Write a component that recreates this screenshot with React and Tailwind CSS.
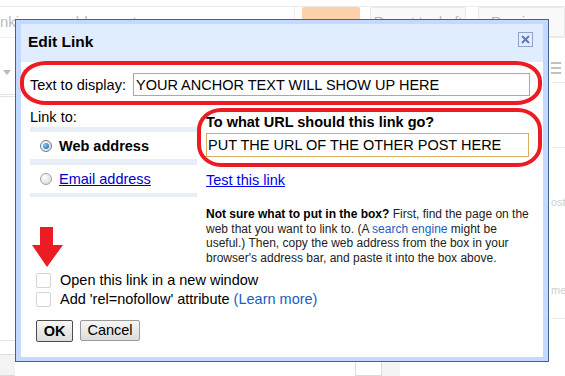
import { useState } from "react";

function Radio({ checked }) {
  return (
    <span
      className={
        "flex h-[12px] w-[12px] shrink-0 items-center justify-center rounded-full border " +
        (checked
          ? "border-[#6b7d94] bg-[radial-gradient(circle_at_35%_35%,#ffffff,#c9d3de)]"
          : "border-[#a4a4a4] bg-[radial-gradient(circle_at_35%_35%,#ffffff,#d4d4d4)]")
      }
    >
      {checked && (
        <span className="h-[6px] w-[6px] rounded-full bg-[radial-gradient(circle_at_35%_35%,#8fc6ef,#1d5b92)]" />
      )}
    </span>
  );
}

function Checkbox() {
  return <span className="h-[15px] w-[15px] shrink-0 rounded-[2px] border border-[#d4d4d4] bg-white" />;
}

export default function App() {
  const [anchor, setAnchor] = useState("YOUR ANCHOR TEXT WILL SHOW UP HERE");
  const [url, setUrl] = useState("PUT THE URL OF THE OTHER POST HERE");
  const [linkType, setLinkType] = useState("web");

  return (
    <div className="relative h-[376px] w-[565px] overflow-hidden bg-white font-['Liberation_Sans',Arial,sans-serif] text-black">
      {/* Faded editor page behind the dialog */}
      <div className="flex h-full flex-col opacity-40">
        <div className="h-[7px] border-b border-[#cfcfcf]" />
        <div className="flex h-[31px] items-stretch border-b border-[#d6d6d6]">
          <div className="flex w-[295px] items-center border-r border-[#cfcfcf] pl-0 text-[15px] text-[#555]">
            nking <span className="ml-[40px]">blog post</span>
          </div>
          <div className="ml-[7px] w-[58px] rounded-[2px] bg-[#f98c2b]" />
          <div className="ml-[10px] flex w-[96px] items-center justify-center rounded-[2px] border border-[#c8c8c8] bg-[#f1f1f1] text-[14px] text-[#444]">
            Revert to draft
          </div>
          <div className="ml-[12px] flex flex-1 items-center rounded-[2px] border border-[#c8c8c8] bg-[#f1f1f1] pl-[12px] text-[15px] text-[#444]">
            Preview
          </div>
        </div>
        <div className="flex flex-1">
          <div className="flex w-[15px] shrink-0 flex-col">
            <div className="mt-[32px] ml-[3px] h-0 w-0 border-x-[4px] border-t-[5px] border-x-transparent border-t-[#555]" />
            <div className="mt-[19px] h-[3px] border-y border-[#bbb]" />
            <div className="flex-1" />
            <div className="h-[14px] border-t border-[#bbb]" />
            <div className="h-[22px] border-y border-[#aaa] bg-[#e3e3e3]" />
          </div>
          <div className="flex flex-1 flex-col">
            <div className="flex-1" />
            <div className="ml-[340px] flex h-[22px]">
              <div className="w-[27px] border border-[#aaa] bg-white" />
              <div className="w-[18px] bg-[#e3e3e3]" />
            </div>
          </div>
          <div className="flex w-[16px] shrink-0 flex-col pl-[2px] text-[11px] leading-[16px] text-[#888]">
            <div className="mt-[24px] flex flex-col gap-[3px]">
              <span className="h-[2px] w-[10px] bg-[#666]" />
              <span className="h-[2px] w-[10px] bg-[#666]" />
              <span className="h-[2px] w-[10px] bg-[#666]" />
            </div>
            <div className="mt-[8px] h-px bg-[#ccc]" />
            <div className="mt-[64px] h-px bg-[#ccc]" />
            <div className="mt-[46px]">ost</div>
            <div className="mt-[72px]">me</div>
            <div className="mt-[20px] h-px bg-[#ccc]" />
          </div>
        </div>
      </div>

      {/* Edit Link dialog */}
      <div className="absolute left-[15px] top-[19px] flex h-[343px] w-[534px] flex-col border border-[#43628e] bg-[#c3d9ff] px-[5px] pt-[4px] pb-[4px]">
        <div className="flex h-[38px] shrink-0 items-start justify-between bg-[#e0ecff] pl-[7px] pr-[10px]">
          <h1 className="pt-[8px] text-[15.5px] leading-[20px] font-bold">Edit Link</h1>
          <button className="mt-[8px] flex h-[15px] w-[15px] items-center justify-center border border-[#8ea2c9] bg-[#e4eefd]">
            <svg width="11" height="11" viewBox="0 0 11 11">
              <path d="M2 2 L9 9 M9 2 L2 9" stroke="#5f7db3" strokeWidth="2" />
            </svg>
          </button>
        </div>

        <div className="flex flex-1 flex-col bg-white pl-[9px] pr-[13px] pt-[11px] text-[14.5px] leading-[18px]">
          <div className="flex items-center">
            <label className="w-[103px]">Text to display:</label>
            <input
              value={anchor}
              onChange={(e) => setAnchor(e.target.value)}
              className="h-[23px] w-[397px] border border-[#a9a9a9] px-[2px] text-[14.5px] outline-none"
            />
          </div>

          <div className="mt-[12px] flex">
            <div className="w-[167px]">
              <div className="h-[19px] leading-[19px]">Link to:</div>
              <div className="flex flex-col gap-[6px] bg-[#e8eef7] pt-[5px] pb-[4px]">
                <button
                  onClick={() => setLinkType("web")}
                  className="flex h-[27px] items-center gap-[7px] bg-white pl-[10px] text-left"
                >
                  <Radio checked={linkType === "web"} />
                  <span className="font-bold">Web address</span>
                </button>
                <button
                  onClick={() => setLinkType("email")}
                  className="flex h-[28px] items-center gap-[7px] bg-white pl-[10px] text-left"
                >
                  <Radio checked={linkType === "email"} />
                  <span className="text-[#0000cc] underline">Email address</span>
                </button>
              </div>
            </div>

            <div className="ml-[9px] flex w-[323px] flex-col pt-[5px]">
              <div className="font-bold">To what URL should this link go?</div>
              <input
                value={url}
                onChange={(e) => setUrl(e.target.value)}
                className="mt-[2px] h-[24px] w-[323px] border border-[#d8ad62] px-[1px] text-[14.5px] outline-none"
              />
              <a href="#" className="mt-[14px] text-[#0000ee] underline">
                Test this link
              </a>
              <p className="mt-[18px] text-[12px] leading-[14.7px] text-[#222]">
                <b className="text-black">Not sure what to put in the box?</b> First, find the page on the
                <br />
                web that you want to link to. (A <span className="text-[#1a5dc2]">search engine</span> might be
                <br />
                useful.) Then, copy the web address from the box in your
                <br />
                browser's address bar, and paste it into the box above.
              </p>
            </div>
          </div>

          <div className="mt-[5px] flex flex-col pl-[6px]">
            <label className="flex h-[19px] items-center gap-[9px]">
              <Checkbox />
              <span>Open this link in a new window</span>
            </label>
            <label className="flex h-[19px] items-center gap-[9px]">
              <Checkbox />
              <span>
                Add 'rel=nofollow' attribute <span className="text-[#1a5dc2]">(Learn more)</span>
              </span>
            </label>
          </div>

          <div className="mt-[11px] flex gap-[7px] pl-[6px]">
            <button className="h-[22px] w-[37px] rounded-[2px] border border-[#4d4d4d] bg-[linear-gradient(#f6f6f6,#dcdcdc)] font-bold leading-[20px]">
              OK
            </button>
            <button className="h-[21px] w-[60px] rounded-[2px] border border-[#9a9a9a] bg-[linear-gradient(#f6f6f6,#dcdcdc)] leading-[19px]">
              Cancel
            </button>
          </div>
        </div>
      </div>

      {/* Red annotation marks */}
      <div className="pointer-events-none absolute left-[20px] top-[61px] h-[44px] w-[522px] rounded-[26px/20px] border-[4px] border-[#ed1c24]" />
      <div className="pointer-events-none absolute left-[197px] top-[108px] h-[59px] w-[345px] rounded-[24px/22px] border-[4px] border-[#ed1c24]" />
      <svg className="pointer-events-none absolute left-[31px] top-[226px]" width="33" height="42" viewBox="0 0 33 42">
        <polygon points="9,1 22,1 22,19 32,19 16,41 1,19 9,19" fill="#ed1c24" />
      </svg>
    </div>
  );
}
